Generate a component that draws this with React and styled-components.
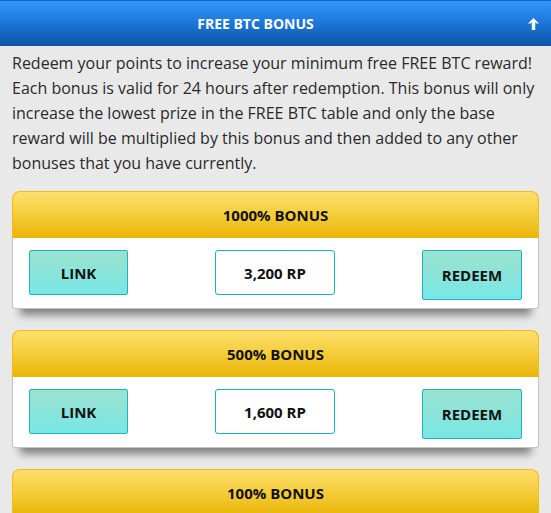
import React from 'react'
import styled, { createGlobalStyle } from 'styled-components'

const GlobalStyle = createGlobalStyle`
html, body {
    margin: 0;
    padding: 0;
    overflow: hidden;
    background-color: #e9e9e9;
    font-family: "Open Sans", "Liberation Sans", sans-serif;
}
`

const bonuses = [
    { title: '1000% BONUS', cost: '3,200 RP' },
    { title: '500% BONUS', cost: '1,600 RP' },
    { title: '100% BONUS', cost: '320 RP' },
]

const ArrowUp = () => (
    <svg width="13" height="14" viewBox="0 0 13 14">
        <path d="M6.5 1 L12 6.6 L9.6 6.6 L8.2 5.3 L8.2 13 L4.8 13 L4.8 5.3 L3.4 6.6 L1 6.6 Z" fill="#fff" />
    </svg>
)

const App = () => {
    return (
        <>
            <GlobalStyle />
            <Page>
                <TopBar>
                    <TopTitle>FREE BTC BONUS</TopTitle>
                    <TopIcon><ArrowUp /></TopIcon>
                </TopBar>
                <Intro>
                    Redeem your points to increase your minimum free FREE BTC reward! Each bonus is valid for 24 hours after redemption. This bonus will only increase the lowest prize in the FREE BTC table and only the base reward will be multiplied by this bonus and then added to any other bonuses that you have currently.
                </Intro>
                <CardList>
                    {bonuses.map((b, i) => (
                        <Card key={i}>
                            <CardHead>{b.title}</CardHead>
                            <CardBody>
                                <ActionButton>LINK</ActionButton>
                                <CostBox>{b.cost}</CostBox>
                                <ActionButton tall>REDEEM</ActionButton>
                            </CardBody>
                        </Card>
                    ))}
                </CardList>
            </Page>
        </>
    )
}

export default App

const Page = styled.div`
width: 551px;
height: 513px;
overflow: hidden;
`
const TopBar = styled.div`
height: 45px;
display: flex;
align-items: center;
justify-content: center;
padding-right: 40px;
position: relative;
border-top: 1px solid #1565c8;
background: linear-gradient(to bottom, #3399fb 0%, #1f78dc 45%, #0b54a6 100%);
`
const TopTitle = styled.h1`
margin: 0;
color: #fff;
font-size: 14px;
font-weight: 700;
`
const TopIcon = styled.span`
position: absolute;
right: 11px;
top: 16px;
display: flex;
`
const Intro = styled.p`
margin: 0;
padding: 5px 12px 0 12px;
font-size: 16px;
line-height: 25px;
color: #2a2a2a;
`
const CardList = styled.div`
display: flex;
flex-direction: column;
gap: 21px;
padding: 15px 12px 0 12px;
`
const Card = styled.div`
width: 527px;
border-radius: 8px 8px 3px 3px;
box-shadow: 0 14px 8px -8px rgba(0, 0, 0, 0.45);
`
const CardHead = styled.div`
height: 47px;
box-sizing: border-box;
display: flex;
align-items: center;
justify-content: center;
border: 1px solid #f6ba10;
border-bottom: none;
border-radius: 8px 8px 0 0;
background: linear-gradient(to bottom, #fddf6e 0%, #f6cf3e 45%, #e9b506 100%);
color: #111;
font-size: 15px;
font-weight: 700;
`
const CardBody = styled.div`
height: 71px;
box-sizing: border-box;
display: flex;
align-items: flex-start;
justify-content: space-between;
padding: 12px 16px 0 16px;
background: #fff;
border: 1px solid #c4c4c4;
border-top: none;
border-radius: 0 0 3px 3px;
`
const ActionButton = styled.button`
width: ${p => (p.tall ? '100px' : '99px')};
height: ${p => (p.tall ? '50px' : '45px')};
border: 1px solid #1fb2bf;
border-radius: 2px;
background: linear-gradient(to bottom, #9be2cf 0%, #78e7e5 100%);
color: #111;
font-family: "Open Sans", "Liberation Sans", sans-serif;
font-size: 15px;
font-weight: 700;
padding: 0;
`
const CostBox = styled.div`
width: 120px;
height: 45px;
box-sizing: border-box;
display: flex;
align-items: center;
justify-content: center;
border: 1px solid #1fb0bb;
border-radius: 3px;
background: #fff;
color: #111;
font-size: 15px;
font-weight: 700;
`
